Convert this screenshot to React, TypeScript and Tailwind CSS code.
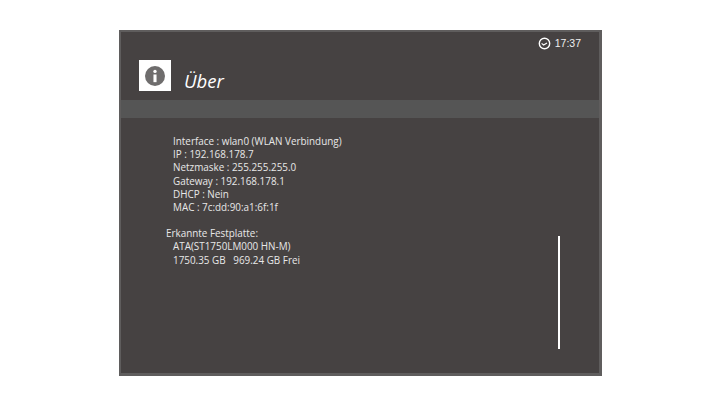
import React from "react";

const netLines = [
  "Interface : wlan0 (WLAN Verbindung)",
  "IP : 192.168.178.7",
  "Netzmaske : 255.255.255.0",
  "Gateway : 192.168.178.1",
  "DHCP : Nein",
  "MAC : 7c:dd:90:a1:6f:1f",
];

const App: React.FC = () => {
  return (
    <div className="w-[720px] h-[405px] bg-white pt-[30px] pl-[119px] font-['Open_Sans',sans-serif]">
      <div className="w-[483px] h-[346px] bg-[#464242] border-2 border-[#5f5d5d] border-r-[3px] border-b-[3px] flex flex-col">
        {/* clock */}
        <div className="h-[20px] flex items-center justify-end pr-[18px] pt-[2px] gap-[4px] text-[#f0f0f0] text-[10.5px] font-['Liberation_Sans',sans-serif] leading-none">
          <svg width="13" height="13" viewBox="0 0 13 13" fill="none" stroke="white" strokeWidth="1.4">
            <circle cx="6.5" cy="6.5" r="5.2" />
            <path d="M3.6 6.4 L5.6 8 L9 6" strokeWidth="1.1" />
          </svg>
          <span>17:37</span>
        </div>

        {/* title */}
        <div className="h-[48px] pl-[18px] pt-[8px] flex items-start gap-[13px]">
          <div className="w-[32px] h-[31px] bg-white flex items-center justify-center">
            <svg width="20" height="20" viewBox="0 0 26 26">
              <circle cx="13" cy="13" r="13" fill="#6f6d6d" />
              <circle cx="13" cy="7" r="2.2" fill="white" />
              <rect x="11" y="11" width="4" height="10" fill="white" />
            </svg>
          </div>
          <span className="text-[18.5px] italic text-white leading-none mt-[12px]">Über</span>
        </div>

        <div className="h-[18px] bg-[#555555]" />

        {/* body */}
        <div className="flex-1 flex pt-[17px]">
          <div className="flex-1 pl-[45px] text-[9.9px] text-[#e8e8e8] leading-[13.2px] whitespace-pre">
            <div className="pl-[7px]">
              {netLines.map((line) => (
                <div key={line}>{line}</div>
              ))}
            </div>
            <div className="mt-[13px]">Erkannte Festplatte:</div>
            <div className="pl-[7px]">
              <div>ATA(ST1750LM000 HN-M)</div>
              <div>1750.35 GB   969.24 GB Frei</div>
            </div>
          </div>
          <div className="w-[2px] h-[113px] mt-[101px] mr-[39px] bg-white" />
        </div>
      </div>
    </div>
  );
};

export default App;
